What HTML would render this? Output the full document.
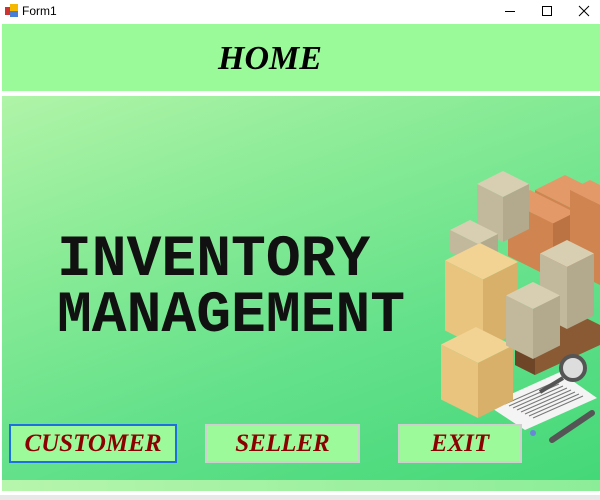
<!DOCTYPE html>
<html><head><style>
*{margin:0;padding:0;box-sizing:border-box}
body{width:600px;height:500px;overflow:hidden;background:#fff;font-family:"Liberation Sans",sans-serif;position:relative}
.tb{position:absolute;left:0;top:0;width:600px;height:24px;background:#fff}
.tb .t{position:absolute;left:22px;top:4px;font-size:12px;color:#000}
.top{position:absolute;left:2px;top:24px;width:598px;height:67px;background:#9afa9a}
.home{position:absolute;left:0;width:540px;top:40px;text-align:center;font:italic bold 34px "Liberation Serif",serif;color:#000}
.main{position:absolute;left:2px;top:96px;width:598px;height:384px;background:linear-gradient(160deg,#b0f4a8 0%,#8aeb96 30%,#62e08a 65%,#44d878 100%)}
.strip{position:absolute;left:2px;top:480px;width:598px;height:11px;background:linear-gradient(90deg,#b6f5ac,#8ced98)}
.bot{position:absolute;left:0;top:495px;width:600px;height:5px;background:#e8e8e8}
.inv{position:absolute;left:57px;font:bold 58px "Liberation Mono",monospace;color:#111;letter-spacing:0px;line-height:1}
.btn{position:absolute;top:424px;height:39px;background:#9cfa9a;border:2px solid #cfcfcf;font:italic bold 25px "Liberation Serif",serif;color:#8b0000;text-align:center;line-height:35px}
</style></head><body>
<div class="tb">
<svg style="position:absolute;left:5px;top:4px" width="14" height="14"><rect x="0" y="3" width="7" height="8" fill="#c33"/><rect x="5" y="0" width="8" height="8" fill="#f5b800"/><rect x="5" y="7" width="8" height="6" fill="#4a7fd8"/></svg>
<span class="t">Form1</span>
<svg style="position:absolute;left:500px;top:0" width="100" height="24" stroke="#000" fill="none" stroke-width="1"><line x1="5" y1="11.5" x2="15" y2="11.5"/><rect x="42.5" y="6.5" width="9" height="9"/><path d="M79 6L89 16M89 6L79 16"/></svg>
</div>
<div class="top"></div>
<div class="home">HOME</div>
<div class="main"></div>
<div class="strip"></div>
<div class="bot"></div>
<div class="inv" style="top:232px">INVENTORY</div>
<div class="inv" style="top:288px">MANAGEMENT</div>
<svg id="art" style="position:absolute;left:0;top:0" width="600" height="500"></svg>
<div class="btn" style="left:9px;width:168px;border-color:#1e6fe0">CUSTOMER</div>
<div class="btn" style="left:205px;width:155px">SELLER</div>
<div class="btn" style="left:398px;width:124px">EXIT</div>
<script>
var s=document.getElementById('art'),h='';
function P(pts,c){h+='<polygon points="'+pts.map(function(p){return p.join(',')}).join(' ')+'" fill="'+c+'"/>';}
function cube(cx,ty,a,b,H,ct,cl,cr){
P([[cx,ty],[cx+b,ty+b/2],[cx+b-a,ty+b/2+a/2],[cx-a,ty+a/2]],ct);
P([[cx-a,ty+a/2],[cx+b-a,ty+b/2+a/2],[cx+b-a,ty+b/2+a/2+H],[cx-a,ty+a/2+H]],cl);
P([[cx+b-a,ty+b/2+a/2],[cx+b,ty+b/2],[cx+b,ty+b/2+H],[cx+b-a,ty+b/2+a/2+H]],cr);}
var G=['#d8cfb2','#c2b99c','#b3aa8e'],O=['#e39a68','#d0844f','#bb7344'],T=['#f2d393','#e8c47e','#d9b06a'];
// paper
P([[487,405],[560,372],[597,398],[525,430]],'#f4f4f4');
for(var i=0;i<8;i++)h+='<line x1="'+(505+i*4)+'" y1="'+(404+i*2)+'" x2="'+(555+i*4)+'" y2="'+(382+i*2)+'" stroke="#777" stroke-width="1"/>';
h+='<circle cx="533" cy="433" r="3" fill="#6a86d8"/>';
h+='<line x1="552" y1="440" x2="592" y2="413" stroke="#555" stroke-width="6" stroke-linecap="round"/>';
// orange group
cube(565,175,30,40,60,O[0],O[1],O[2]);
cube(530,190,22,45,55,O[0],O[1],O[2]);
cube(590,180,20,30,80,O[0],O[1],O[2]);
// gray top
cube(503,171,26,26,45,G[0],G[1],G[2]);
cube(470,220,20,28,22,G[0],G[1],G[2]);
// pallet
P([[515,345],[580,315],[600,325],[600,345],[535,375],[515,365]],'#8a5a34');
P([[515,345],[535,355],[535,375],[515,365]],'#6e4526');
// tan crates
cube(480,243,35,38,70,T[0],T[1],T[2]);
cube(476,327,35,37,55,T[0],T[1],T[2]);
// gray stacks
cube(567,240,27,27,62,G[0],G[1],G[2]);
cube(533,282,27,27,50,G[0],G[1],G[2]);
// magnifier
h+='<line x1="563" y1="378" x2="540" y2="392" stroke="#555" stroke-width="4"/>';
h+='<circle cx="573" cy="368" r="12" fill="#ddd" stroke="#555" stroke-width="4"/>';
s.innerHTML=h;
</script>
</body></html>
